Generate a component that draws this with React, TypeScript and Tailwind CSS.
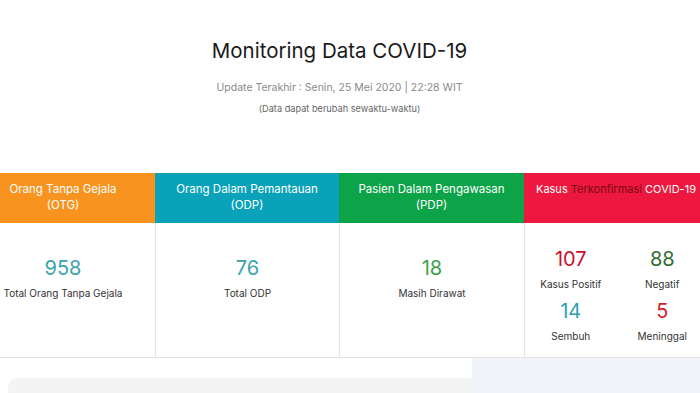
const font = { fontFamily: "Inter, 'Noto Sans', sans-serif" };

type Col = {
  title: string;
  sub: string;
  bg: string;
  value: string;
  color: string;
  label: string;
};

const cols: Col[] = [
  { title: "Orang Tanpa Gejala", sub: "(OTG)", bg: "bg-[#f7931e]", value: "958", color: "text-[#3ba3ab]", label: "Total Orang Tanpa Gejala" },
  { title: "Orang Dalam Pemantauan", sub: "(ODP)", bg: "bg-[#0aa2b9]", value: "76", color: "text-[#3ba3ab]", label: "Total ODP" },
  { title: "Pasien Dalam Pengawasan", sub: "(PDP)", bg: "bg-[#0da449]", value: "18", color: "text-[#3aa24a]", label: "Masih Dirawat" },
];

function Stat({ value, color, label }: { value: string; color: string; label: string }) {
  return (
    <div className="flex flex-col items-center">
      <div className={`text-[20px] leading-[24px] ${color}`}>{value}</div>
      <div className="text-[10px] leading-[14px] text-[#333] mt-[6px] whitespace-nowrap">{label}</div>
    </div>
  );
}

export default function App() {
  return (
    <div className="w-[700px] h-[393px] overflow-hidden bg-white" style={font}>
      <div className="flex flex-col items-center pt-[36px] pr-[21px]">
        <h1 className="text-[20.5px] leading-[30px] text-[#1a1a1a]">Monitoring Data COVID-19</h1>
        <p className="mt-[14px] text-[10.5px] leading-[16px] text-[#8a8a8a]">Update Terakhir : Senin, 25 Mei 2020 | 22:28 WIT</p>
        <p className="mt-[6px] text-[9.2px] leading-[14px] text-[#666]">(Data dapat berubah sewaktu-waktu)</p>
      </div>

      <div className="mt-[57px] ml-[-29px] w-[737px] grid grid-cols-[184px_184px_185px_184px] border-b border-[#e3e3e3]">
        {cols.map((c, i) => (
          <div key={i} className="flex flex-col">
            <div className={`h-[50px] ${c.bg} pt-[8px] text-center text-white text-[11.5px] leading-[16px]`}>
              <div>{c.title}</div>
              <div>{c.sub}</div>
            </div>
            <div className={`h-[134px] pt-[33px] ${i > 0 ? "border-l border-[#e3e3e3]" : ""}`}>
              <Stat value={c.value} color={c.color} label={c.label} />
            </div>
          </div>
        ))}
        <div className="flex flex-col">
          <div className="h-[50px] bg-[#ed1740] pt-[8px] text-center text-white text-[11px] leading-[16px] whitespace-nowrap">
            Kasus <span className="text-[#7a0a12]">Terkonfirmasi</span> COVID-19
          </div>
          <div className="h-[134px] border-l border-[#e3e3e3] grid grid-cols-2 pt-[24px] gap-y-[8px] content-start">
            <Stat value="107" color="text-[#c8102e]" label="Kasus Positif" />
            <Stat value="88" color="text-[#2f6b35]" label="Negatif" />
            <Stat value="14" color="text-[#2f9fae]" label="Sembuh" />
            <Stat value="5" color="text-[#d01f2a]" label="Meninggal" />
          </div>
        </div>
      </div>

      <div className="flex h-[40px]">
        <div className="w-[472px] pt-[20px] pl-[8px]">
          <div className="h-full bg-[#f4f4f4] rounded-tl-[10px]" />
        </div>
        <div className="flex-1 bg-[#f1f4f9]" />
      </div>
    </div>
  );
}
